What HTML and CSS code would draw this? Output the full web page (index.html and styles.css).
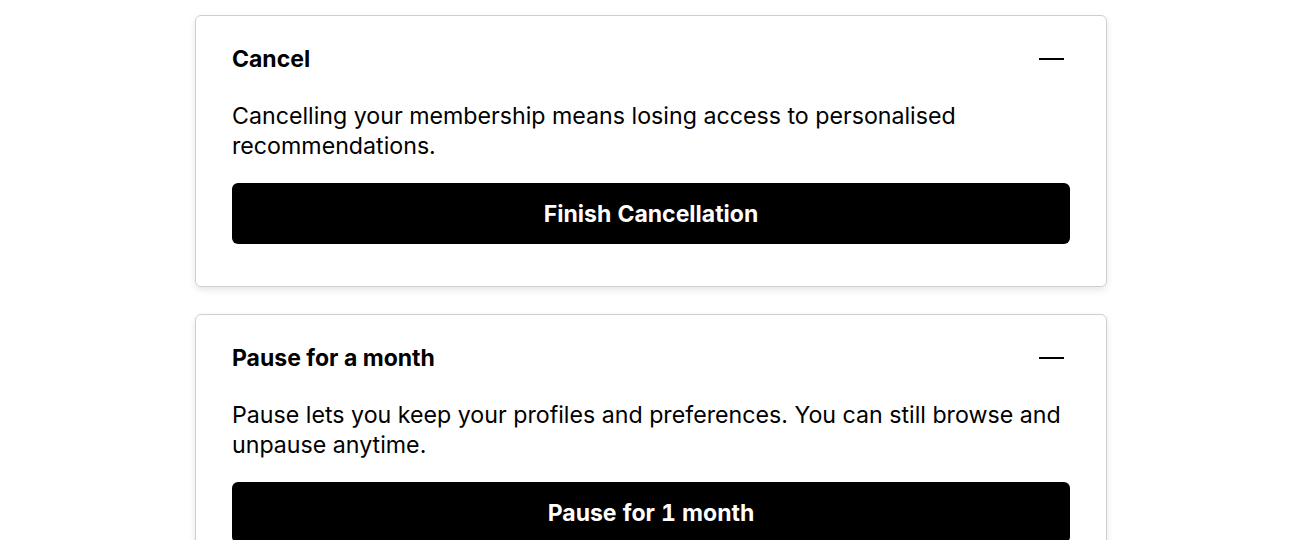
FILE: index.html
```html
<!DOCTYPE html>
<html lang="en">
<head>
  <meta charset="UTF-8">
  <title>Cancel membership</title>
  <link rel="stylesheet" href="styles.css">
</head>
<body>

  <div class="options">
    <div class="option">
      <div class="option-head">
        <h2>Cancel</h2>
        <span class="collapse"></span>
      </div>
      <p>Cancelling your membership means losing access to personalised recommendations.</p>
      <button class="btn">Finish Cancellation</button>
    </div>

    <div class="option">
      <div class="option-head">
        <h2>Pause for a month</h2>
        <span class="collapse"></span>
      </div>
      <p>Pause lets you keep your profiles and preferences. You can still browse and unpause anytime.</p>
      <button class="btn">Pause for 1 month</button>
    </div>
  </div>

</body>
</html>
```

FILE: styles.css
```css
body {
  margin: 0;
  font-family: Inter, "Noto Sans", sans-serif;
  background-color: #fff;
  color: #000;
}
.options {
  width: 912px;
  margin: 15px auto 0;
  padding-left: 2px;
  display: flex;
  flex-direction: column;
  gap: 27px;
}
.option {
  border: 1px solid #cfcfcf;
  border-radius: 6px;
  box-shadow: 0 3px 7px rgba(0, 0, 0, 0.1);
  padding: 28px 36px 42px;
}
.option-head {
  display: flex;
  justify-content: space-between;
  align-items: center;
  height: 30px;
}
.option-head h2 {
  margin: 0;
  font-size: 23px;
  font-weight: 700;
}
.collapse {
  width: 25px;
  height: 2px;
  background: #000;
  margin-right: 6px;
}
.option p {
  margin: 27px 0 22px;
  font-size: 23.2px;
  line-height: 30px;
}
.btn {
  display: block;
  width: 100%;
  height: 61px;
  border: none;
  border-radius: 6px;
  background: #000;
  color: #fff;
  font-family: inherit;
  font-size: 23px;
  font-weight: 700;
  font-variant-numeric: tabular-nums;
}
```
